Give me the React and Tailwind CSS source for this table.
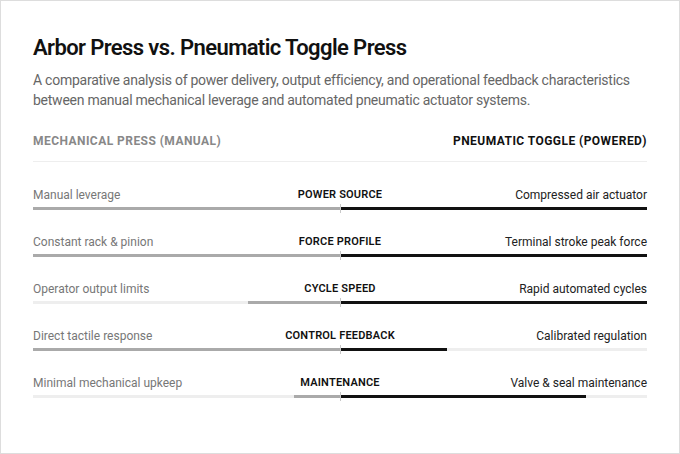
import React from "react";

const rows = [
  { left: "Manual leverage", label: "POWER SOURCE", right: "Compressed air actuator", l: 100, r: 100 },
  { left: "Constant rack & pinion", label: "FORCE PROFILE", right: "Terminal stroke peak force", l: 100, r: 100 },
  { left: "Operator output limits", label: "CYCLE SPEED", right: "Rapid automated cycles", l: 30, r: 100 },
  { left: "Direct tactile response", label: "CONTROL FEEDBACK", right: "Calibrated regulation", l: 100, r: 35 },
  { left: "Minimal mechanical upkeep", label: "MAINTENANCE", right: "Valve & seal maintenance", l: 15, r: 80 },
];

function Row({ row }) {
  return (
    <div className="mb-[23px]">
      <div className="grid grid-cols-[1fr_auto_1fr] items-center h-4">
        <span className="text-[12px] text-[#777]">{row.left}</span>
        <span className="text-[11px] font-semibold text-[#111] tracking-[0.2px]">{row.label}</span>
        <span className="text-[12px] text-[#222] text-right">{row.right}</span>
      </div>
      <div className="relative mt-[5px] flex h-[3px]">
        <div className="flex flex-1 justify-end bg-[#eeeeee]">
          <div className="h-full bg-[#aaaaaa]" style={{ width: row.l + "%" }} />
        </div>
        <div className="flex flex-1 justify-start bg-[#eeeeee]">
          <div className="h-full bg-[#111111]" style={{ width: row.r + "%" }} />
        </div>
        <div className="absolute left-1/2 top-[-3px] h-[9px] w-px bg-[#c8c8c8]" />
      </div>
    </div>
  );
}

export default function App() {
  return (
    <div
      className="w-[680px] h-[454px] bg-white border border-[#dddddd] px-8 pt-[33px]"
      style={{ fontFamily: '"Segoe UI", Roboto, sans-serif' }}
    >
      <h1 className="text-[22px] leading-[28px] font-semibold text-[#111] tracking-[-0.6px]">
        Arbor Press vs. Pneumatic Toggle Press
      </h1>
      <p className="mt-2 text-[14px] leading-5 text-[#666] tracking-[-0.25px]">
        A comparative analysis of power delivery, output efficiency, and operational feedback characteristics
        between manual mechanical leverage and automated pneumatic actuator systems.
      </p>

      <div className="mt-[23px] flex justify-between border-b border-[#eeeeee] pb-3 text-[12px] leading-4 font-bold tracking-[0.45px]">
        <span className="text-[#888]">MECHANICAL PRESS (MANUAL)</span>
        <span className="text-[#111]">PNEUMATIC TOGGLE (POWERED)</span>
      </div>

      <div className="mt-6">
        {rows.map((r) => (
          <Row key={r.label} row={r} />
        ))}
      </div>
    </div>
  );
}
